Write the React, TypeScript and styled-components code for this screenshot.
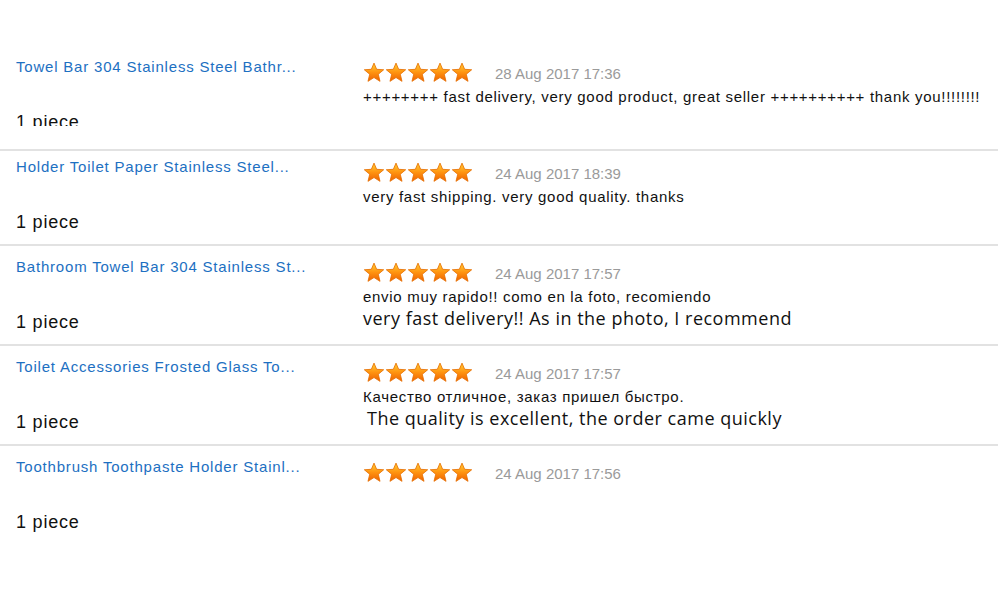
import React from "react";
import styled, { createGlobalStyle } from "styled-components";

const Global = createGlobalStyle`
  html, body { margin: 0; padding: 0; background: #fff; }
  body { font-family: "Liberation Sans", Arial, sans-serif; }
`;

const Page = styled.div`
  width: 1000px;
  height: 591px;
  overflow: hidden;
  padding-top: 46px;
  box-sizing: border-box;
`;

const List = styled.div`
  display: flex;
  flex-direction: column;
  width: 998px;
`;

const Row = styled.div<{ $last?: boolean; $height: number }>`
  display: grid;
  grid-template-columns: 363px 1fr;
  height: ${(p) => p.$height}px;
  border-bottom: ${(p) => (p.$last ? "none" : "2px solid #e2e2e2")};
`;

const Left = styled.div<{ $lift: number }>`
  display: flex;
  flex-direction: column;
  padding-left: 16px;
  padding-top: ${(p) => 12 - p.$lift}px;
`;

const Title = styled.a`
  font-size: 15px;
  line-height: 18px;
  letter-spacing: 0.8px;
  color: #1d70c2;
  text-decoration: none;
  white-space: nowrap;
`;

const QtyBox = styled.div<{ $clip?: number }>`
  margin-top: 36px;
  height: ${(p) => (p.$clip ? `${p.$clip}px` : "auto")};
  overflow: hidden;
`;

const Qty = styled.div`
  font-size: 18px;
  line-height: 21px;
  letter-spacing: 0.8px;
  color: #111;
`;

const Right = styled.div<{ $lift: number }>`
  display: flex;
  flex-direction: column;
  padding-top: ${(p) => 15 - p.$lift}px;
`;

const RatingLine = styled.div`
  display: flex;
  align-items: center;
  height: 22px;
`;

const Stars = styled.div`
  display: flex;
`;

const Date = styled.span`
  margin-left: 22px;
  font-size: 15px;
  color: #9a9a9a;
  padding-top: 2px;
`;

const Comment = styled.div`
  margin-top: 5px;
  font-size: 15px;
  line-height: 18px;
  letter-spacing: 0.7px;
  color: #111;
  white-space: nowrap;
`;

const Translation = styled.div<{ $indent?: number }>`
  font-family: "Open Sans", "Noto Sans", sans-serif;
  font-size: 18px;
  line-height: 24px;
  letter-spacing: 0.5px;
  color: #111;
  padding-left: ${(p) => p.$indent || 0}px;
  white-space: nowrap;
`;

const Star = ({ id }: { id: string }) => (
  <svg width="22" height="21" viewBox="0 0 24 23">
    <defs>
      <linearGradient id={id} x1="0" y1="0" x2="0" y2="1">
        <stop offset="0" stopColor="#ffcf3a" />
        <stop offset="0.5" stopColor="#ff9410" />
        <stop offset="1" stopColor="#ee6200" />
      </linearGradient>
    </defs>
    <path
      d="M12 1.2 L14.9 8 L22.6 8.5 L16.7 13.4 L18.6 21.2 L12 17 L5.4 21.2 L7.3 13.4 L1.4 8.5 L9.1 8 Z"
      fill={`url(#${id})`}
      stroke="#e56e00"
      strokeWidth="0.9"
      strokeLinejoin="round"
    />
  </svg>
);

type Review = {
  title: string;
  date: string;
  comment?: string;
  translation?: string;
  indent?: number;
  height: number;
  lift: number;
  clip?: number;
};

const reviews: Review[] = [
  {
    title: "Towel Bar 304 Stainless Steel Bathr...",
    date: "28 Aug 2017 17:36",
    comment:
      "++++++++ fast delivery, very good product, great seller ++++++++++ thank you!!!!!!!!",
    height: 103,
    lift: 0,
    clip: 14,
  },
  {
    title: "Holder Toilet Paper Stainless Steel...",
    date: "24 Aug 2017 18:39",
    comment: "very fast shipping. very good quality. thanks",
    height: 93,
    lift: 5,
  },
  {
    title: "Bathroom Towel Bar 304 Stainless St...",
    date: "24 Aug 2017 17:57",
    comment: "envio muy rapido!! como en la foto, recomiendo",
    translation: "very fast delivery!! As in the photo, I recommend",
    height: 98,
    lift: 0,
  },
  {
    title: "Toilet Accessories Frosted Glass To...",
    date: "24 Aug 2017 17:57",
    comment: "Качество отличное, заказ пришел быстро.",
    translation: "The quality is excellent, the order came quickly",
    indent: 4,
    height: 98,
    lift: 0,
  },
  {
    title: "Toothbrush Toothpaste Holder Stainl...",
    date: "24 Aug 2017 17:56",
    height: 98,
    lift: 0,
  },
];

export default function App() {
  return (
    <>
      <Global />
      <Page>
        <List>
          {reviews.map((r, i) => (
            <Row key={i} $last={i === reviews.length - 1} $height={r.height}>
              <Left $lift={r.lift}>
                <Title href="#">{r.title}</Title>
                <QtyBox $clip={r.clip}>
                  <Qty>1 piece</Qty>
                </QtyBox>
              </Left>
              <Right $lift={r.lift}>
                <RatingLine>
                  <Stars>
                    {[0, 1, 2, 3, 4].map((s) => (
                      <Star key={s} id={`g${i}${s}`} />
                    ))}
                  </Stars>
                  <Date>{r.date}</Date>
                </RatingLine>
                {r.comment && <Comment>{r.comment}</Comment>}
                {r.translation && (
                  <Translation $indent={r.indent}>{r.translation}</Translation>
                )}
              </Right>
            </Row>
          ))}
        </List>
      </Page>
    </>
  );
}
